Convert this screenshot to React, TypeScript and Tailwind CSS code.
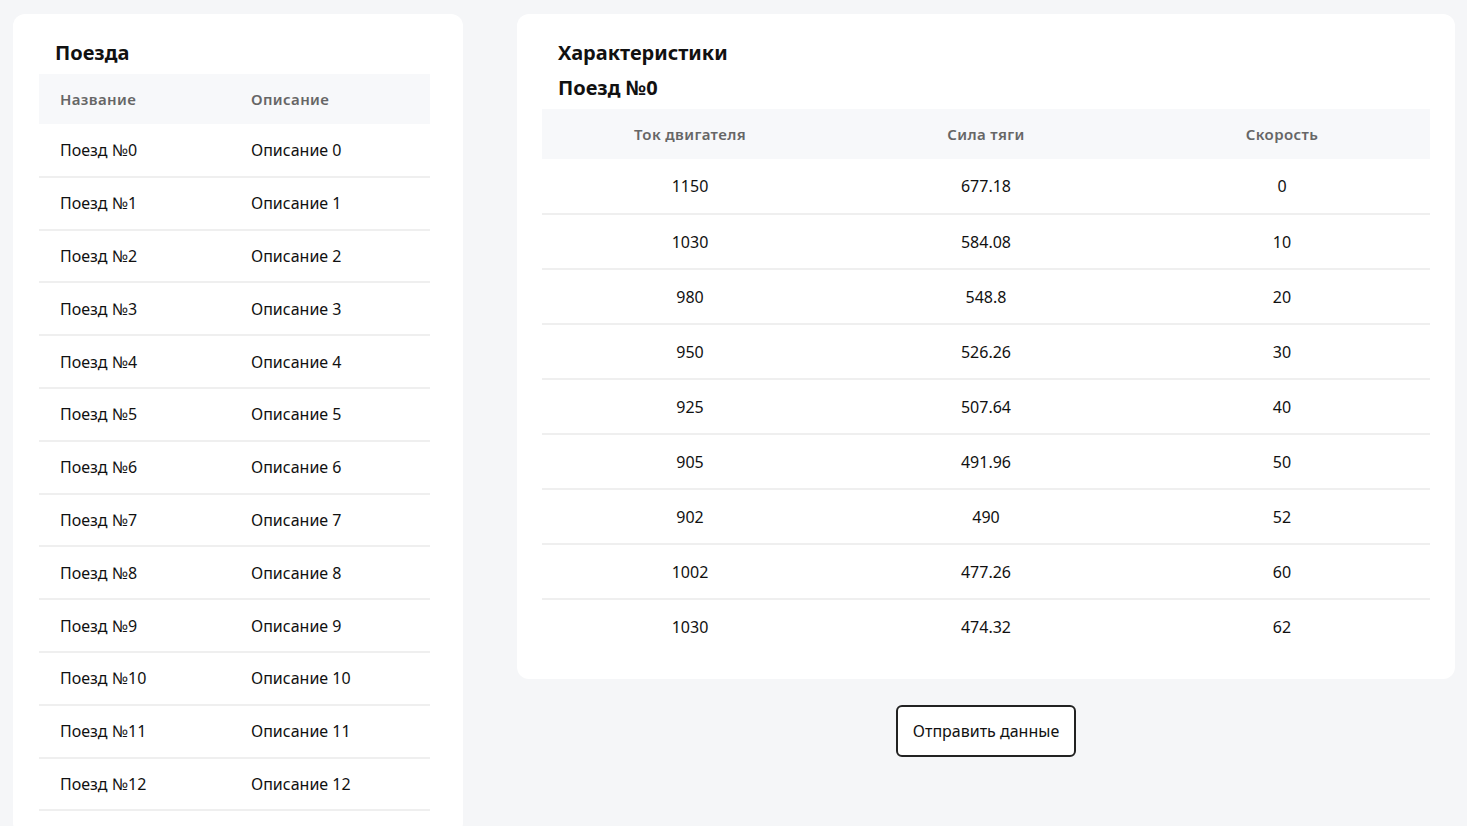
const trains = Array.from({ length: 13 }, (_, i) => ({
  name: `Поезд №${i}`,
  description: `Описание ${i}`,
}));

const specs = [
  { current: 1150, force: 677.18, speed: 0 },
  { current: 1030, force: 584.08, speed: 10 },
  { current: 980, force: 548.8, speed: 20 },
  { current: 950, force: 526.26, speed: 30 },
  { current: 925, force: 507.64, speed: 40 },
  { current: 905, force: 491.96, speed: 50 },
  { current: 902, force: 490, speed: 52 },
  { current: 1002, force: 477.26, speed: 60 },
  { current: 1030, force: 474.32, speed: 62 },
];

export default function App() {
  return (
    <div className="flex min-h-screen items-start gap-[54px] bg-[#f5f6f8] pl-[13px] pr-[12px] pt-[14px] font-['Noto_Sans',sans-serif] text-base text-[#111]">
      {/* список поездов */}
      <div className="w-[450px] shrink-0 rounded-xl bg-white pb-6 pl-[26px] pr-[33px] pt-[21px]">
        <h2 className="mb-1 pl-4 text-xl font-bold leading-[35px]">Поезда</h2>
        <table className="w-full border-collapse">
          <thead>
            <tr className="h-[50px] bg-[#f7f8fa] text-left text-[15px] text-[#666]">
              <th className="w-[191px] pl-[21px] font-semibold tracking-wide">Название</th>
              <th className="pl-[21px] font-semibold tracking-wide">Описание</th>
            </tr>
          </thead>
          <tbody>
            {trains.map((train) => (
              <tr key={train.name} className="h-[52.8px] border-b-2 border-[#efefef]">
                <td className="pl-[21px]">{train.name}</td>
                <td className="pl-[21px]">{train.description}</td>
              </tr>
            ))}
          </tbody>
        </table>
      </div>

      {/* характеристики */}
      <div className="flex flex-1 flex-col items-center">
        <div className="w-full rounded-xl bg-white px-[25px] pb-[25px] pt-[21px]">
          <h2 className="pl-4 text-xl font-bold leading-[35px]">Характеристики</h2>
          <h2 className="mb-1 pl-4 text-xl font-bold leading-[35px]">Поезд №0</h2>
          <table className="w-full table-fixed border-collapse text-center">
            <thead>
              <tr className="h-[50px] bg-[#f7f8fa] text-[15px] text-[#666]">
                <th className="font-semibold tracking-wide">Ток двигателя</th>
                <th className="font-semibold tracking-wide">Сила тяги</th>
                <th className="font-semibold tracking-wide">Скорость</th>
              </tr>
            </thead>
            <tbody>
              {specs.map((row, index) => (
                <tr
                  key={index}
                  className={
                    index < specs.length - 1
                      ? "h-[55px] border-b-2 border-[#efefef]"
                      : "h-[55px]"
                  }
                >
                  <td>{row.current}</td>
                  <td>{row.force}</td>
                  <td>{row.speed}</td>
                </tr>
              ))}
            </tbody>
          </table>
        </div>
        <button className="mt-[26px] h-[52px] w-[180px] rounded-md border-2 border-[#222] bg-white text-base text-[#111]">
          Отправить данные
        </button>
      </div>
    </div>
  );
}
